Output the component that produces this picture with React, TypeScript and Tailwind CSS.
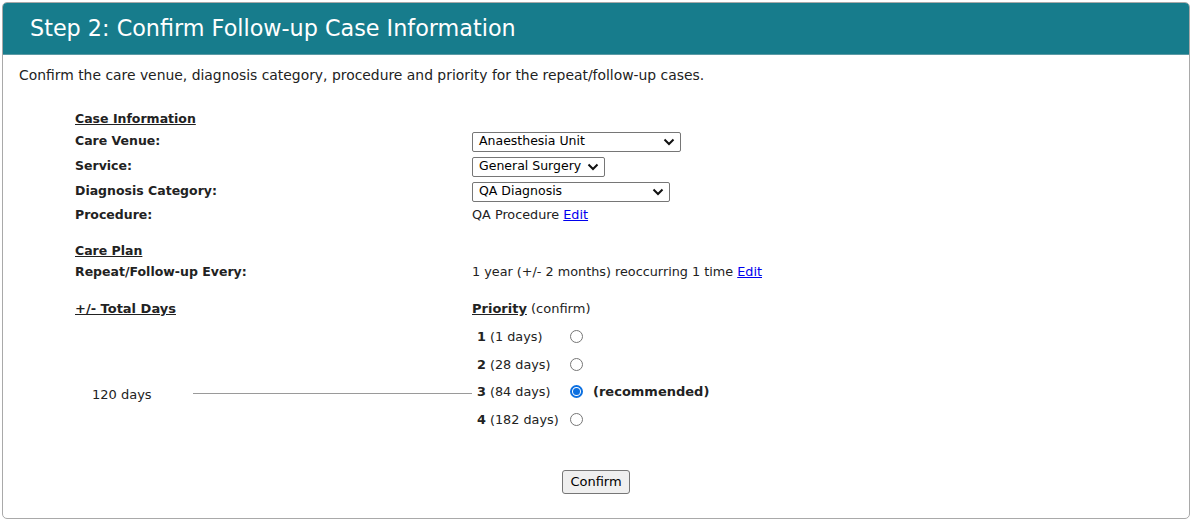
import React from "react";

const rowLabel = "font-bold text-[12.5px] text-[#222]";

function Select({ value, width }: { value: string; width: string }) {
  return (
    <div
      className={`${width} h-[20px] flex items-center justify-between border border-[#767676] rounded-[2px] bg-white pl-[6px] pr-[5px] text-[12.5px] text-black whitespace-nowrap`}
    >
      <span>{value}</span>
      <svg width="12" height="8" viewBox="0 0 12 8" className="ml-[3px] shrink-0">
        <path d="M1.5 1.5 L6 6 L10.5 1.5" fill="none" stroke="#111" strokeWidth="2" />
      </svg>
    </div>
  );
}

function Radio({ checked }: { checked?: boolean }) {
  if (checked) {
    return (
      <span className="w-[13px] h-[13px] rounded-full border-2 border-[#0b6fe0] flex items-center justify-center">
        <span className="w-[7px] h-[7px] rounded-full bg-[#0b6fe0]" />
      </span>
    );
  }
  return <span className="w-[13px] h-[13px] rounded-full border border-[#767676] bg-white" />;
}

const priorities = [
  { n: "1", days: "(1 days)" },
  { n: "2", days: "(28 days)" },
  { n: "3", days: "(84 days)", checked: true },
  { n: "4", days: "(182 days)" },
];

export default function App() {
  return (
    <div
      className="w-[1194px] h-[522px] bg-white p-[2px] text-[13px] text-[#222]"
      style={{ fontFamily: "'DejaVu Sans', Verdana, sans-serif" }}
    >
      <div className="h-[517px] w-[1188px] border border-[#a9a9a9] rounded-[5px] overflow-hidden flex flex-col">
        <div className="h-[52px] bg-[#177c8c] border-b border-[#5b9aa5] flex items-center pl-[27px]">
          <h1 className="text-white text-[22.3px]">Step 2: Confirm Follow-up Case Information</h1>
        </div>

        <p className="pl-[16px] pt-[12px] leading-[16px] text-[13.9px]">
          Confirm the care venue, diagnosis category, procedure and priority for the repeat/follow-up cases.
        </p>

        <div className="pl-[72px] pt-[26px] flex flex-col">
          <div className="h-[20px] flex items-center">
            <span className="font-bold underline text-[12.5px]">Case Information</span>
          </div>
          <div className="h-[25px] flex items-center">
            <span className={`${rowLabel} w-[397px]`}>Care Venue:</span>
            <Select value="Anaesthesia Unit" width="w-[209px]" />
          </div>
          <div className="h-[25px] flex items-center">
            <span className={`${rowLabel} w-[397px]`}>Service:</span>
            <Select value="General Surgery" width="w-[133px]" />
          </div>
          <div className="h-[25px] flex items-center">
            <span className={`${rowLabel} w-[397px]`}>Diagnosis Category:</span>
            <Select value="QA Diagnosis" width="w-[198px]" />
          </div>
          <div className="h-[22px] flex items-center">
            <span className={`${rowLabel} w-[397px]`}>Procedure:</span>
            <span className="text-[12.8px]">
              QA Procedure <a className="text-[#0000ee] underline">Edit</a>
            </span>
          </div>

          <div className="h-[16px]" />
          <div className="h-[19px] flex items-center">
            <span className="font-bold underline text-[12.5px]">Care Plan</span>
          </div>
          <div className="h-[22px] flex items-center">
            <span className={`${rowLabel} w-[397px]`}>Repeat/Follow-up Every:</span>
            <span className="text-[12.8px]">
              1 year (+/- 2 months) reoccurring 1 time <a className="text-[#0000ee] underline">Edit</a>
            </span>
          </div>

          <div className="h-[15px]" />
          <div className="flex">
            <div className="w-[397px] flex flex-col">
              <div className="h-[22px] flex items-center">
                <span className="font-bold underline text-[13px]">+/- Total Days</span>
              </div>
              <div className="pt-[58px]">
                <div className="h-[27.5px] flex items-center">
                  <span className="w-[118px] pl-[17px] pt-[6px]">120 days</span>
                  <div className="flex-1 border-t border-[#9a9a9a] mt-[3px]" />
                </div>
              </div>
            </div>
            <div className="flex flex-col">
              <div className="h-[22px] flex items-center">
                <span className="font-bold underline">Priority</span>
                <span>&nbsp;(confirm)</span>
              </div>
              <div className="pt-[3px] flex flex-col">
                {priorities.map((p) => (
                  <div key={p.n} className="h-[27.5px] flex items-center">
                    <span className="w-[98px] pl-[5px] text-[12.8px]">
                      <b>{p.n}</b> {p.days}
                    </span>
                    <Radio checked={p.checked} />
                    {p.checked && <span className="font-bold ml-[10px]">(recommended)</span>}
                  </div>
                ))}
              </div>
            </div>
          </div>
        </div>

        <div className="flex justify-center pt-[37px]">
          <button className="h-[24px] px-[7px] border border-[#767676] rounded-[3px] bg-[#efefef] text-[13px] text-black">
            Confirm
          </button>
        </div>
      </div>
    </div>
  );
}
